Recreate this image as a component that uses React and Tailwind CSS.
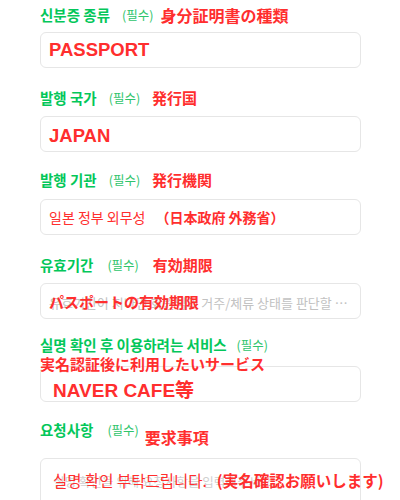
import React from 'react';

const sans = { fontFamily: '"Noto Sans CJK KR", "Noto Sans", sans-serif' };

function FieldLabel({ title, noteGap, children }) {
  return (
    <div className="flex items-center h-5 whitespace-nowrap">
      <span className="text-[14.5px] font-bold leading-5 text-[#03c75a]">{title}</span>
      <span className={`${noteGap} text-[12.5px] leading-5 text-[#2fc46c]`}>(필수)</span>
      {children}
    </div>
  );
}

function Box({ className = '', children }) {
  return (
    <div className={`relative h-9 border border-[#e6e6e6] rounded-md flex items-center px-2 ${className}`}>
      {children}
    </div>
  );
}

const note = 'font-bold text-[#ff2e2e] leading-5';
const jp = { fontFamily: '"Noto Sans CJK JP", "Noto Sans", sans-serif' };
const latin = { fontFamily: '"Liberation Sans", Arial, sans-serif' };

export default function App() {
  return (
    <div className="w-[400px] h-[500px] overflow-hidden bg-white pl-10 pr-[39px]" style={sans}>
      {/* 신분증 종류 */}
      <div className="pt-[5px]">
        <FieldLabel title="신분증 종류" noteGap="ml-[12px]">
          <span className={`ml-[7px] text-[16px] ${note}`} style={jp}>身分証明書の種類</span>
        </FieldLabel>
        <Box className="mt-[7px]">
          <span className="text-[18.5px] font-bold text-[#ff2e2e]" style={latin}>PASSPORT</span>
        </Box>
      </div>

      {/* 발행 국가 */}
      <div className="mt-5">
        <FieldLabel title="발행 국가" noteGap="ml-3">
          <span className={`ml-[12px] text-[15px] ${note}`} style={jp}>発行国</span>
        </FieldLabel>
        <Box className="mt-2">
          <span className="text-[18.5px] font-bold text-[#ff2e2e] mt-[3px]" style={latin}>JAPAN</span>
        </Box>
      </div>

      {/* 발행 기관 */}
      <div className="mt-[18px]">
        <FieldLabel title="발행 기관" noteGap="ml-3">
          <span className={`ml-[12px] text-[15px] ${note}`} style={jp}>発行機関</span>
        </FieldLabel>
        <Box className="mt-[9px]">
          <span className="text-[14px] text-[#ff2e2e]">일본 정부 외무성</span>
          <span className="ml-[10px] text-[14px] font-bold text-[#ff2e2e]" style={jp}>（日本政府 外務省）</span>
        </Box>
      </div>

      {/* 유효기간 */}
      <div className="mt-5">
        <FieldLabel title="유효기간" noteGap="ml-[14px]">
          <span className={`ml-[14px] text-[15px] ${note}`} style={jp}>有効期限</span>
        </FieldLabel>
        <Box className="mt-2">
          <span className="block truncate text-[13px] text-[#c2c2c2] mt-[3px]">
            유효기간이 지나면 회원님의 거주/체류 상태를 판단할 수 없습니다
          </span>
          <span className="absolute left-2 top-[7px] text-[15px] font-bold text-[#ff2e2e]" style={jp}>
            パスポートの有効期限
          </span>
        </Box>
      </div>

      {/* 이용 서비스 */}
      <div className="mt-4 relative">
        <FieldLabel title="실명 확인 후 이용하려는 서비스" noteGap="ml-[10px]" />
        <Box className="mt-[11px]">
          <span className="ml-1 mt-3 text-[19px] font-bold text-[#ff2e2e]" style={latin}>
            NAVER CAFE<span style={jp}>等</span>
          </span>
        </Box>
        <span className={`absolute left-0 top-[19px] text-[15px] whitespace-nowrap ${note}`} style={jp}>
          実名認証後に利用したいサービス
        </span>
      </div>

      {/* 요청사항 */}
      <div className="mt-[18px]">
        <FieldLabel title="요청사항" noteGap="ml-[14px]">
          <span className={`relative top-[7px] ml-[6px] text-[16px] ${note}`} style={jp}>要求事項</span>
        </FieldLabel>
        <div className="relative mt-[18px] h-[70px] border border-[#e6e6e6] rounded-md px-3 pt-[11px]">
          <span className="block text-[12.5px] text-[#d0d0d0] leading-5 mt-[2px]">실명 확인을 위해 요청사항을 입력해주세요.</span>
          <span className="absolute left-3 top-[11px] whitespace-nowrap leading-5 text-[15.5px] text-[#ff2e2e]">
            실명 확인 부탁드립니다.
            <span className="ml-[10px] font-bold" style={jp}>(実名確認お願いします)</span>
          </span>
        </div>
      </div>
    </div>
  );
}
